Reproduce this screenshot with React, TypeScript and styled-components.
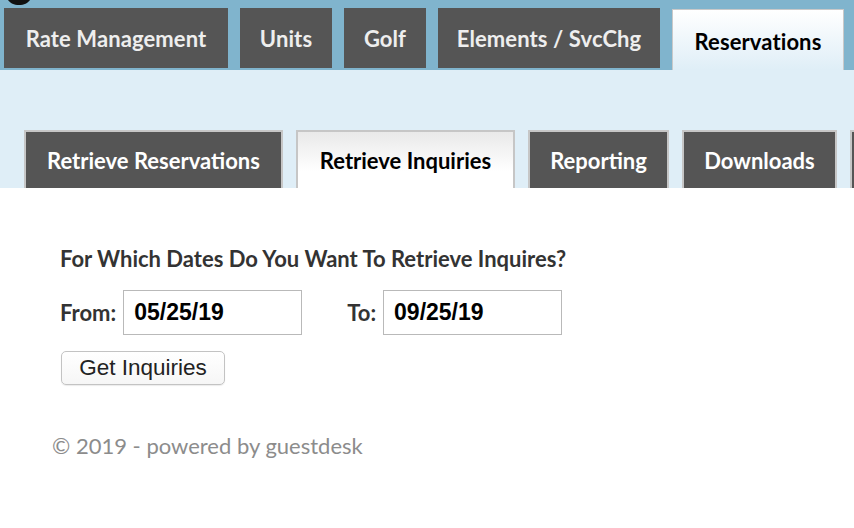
import React from "react";
import styled, { createGlobalStyle } from "styled-components";

const Global = createGlobalStyle`
  html, body { margin: 0; padding: 0; background: #ffffff; }
  body { font-family: Lato, "Open Sans", sans-serif; }
`;

const Page = styled.div`
  position: relative;
  width: 854px;
  min-height: 528px;
  background: #ffffff;
`;

const LogoBit = styled.svg`
  position: absolute;
  left: 0;
  top: 0;
`;

const TopBar = styled.div`
  display: flex;
  align-items: flex-end;
  gap: 12px;
  height: 70px;
  box-sizing: border-box;
  padding: 8px 0 0 4px;
  background: #80b4cd;
`;

const TopTab = styled.div<{ $active?: boolean; $w: number }>`
  flex: none;
  display: flex;
  align-items: center;
  justify-content: center;
  box-sizing: border-box;
  width: ${(p) => p.$w}px;
  height: ${(p) => (p.$active ? 61 : 60)}px;
  margin-bottom: ${(p) => (p.$active ? 0 : 2)}px;
  padding-top: ${(p) => (p.$active ? 2 : 0)}px;
  font-family: Lato, sans-serif;
  font-weight: 700;
  font-size: 22px;
  letter-spacing: 0.1px;
  color: ${(p) => (p.$active ? "#000000" : "#eeeeee")};
  background: ${(p) =>
    p.$active ? "linear-gradient(#ffffff, #dfeef7)" : "#555555"};
  border: ${(p) => (p.$active ? "1px solid #c9c9c9" : "none")};
  border-bottom: none;
`;

const SubBar = styled.div`
  display: flex;
  align-items: flex-end;
  gap: 13px;
  height: 118px;
  box-sizing: border-box;
  padding-left: 24px;
  background: #dfeef7;
  overflow: hidden;
`;

const SubTab = styled.div<{ $active?: boolean; $w: number }>`
  flex: none;
  display: flex;
  align-items: center;
  justify-content: center;
  box-sizing: border-box;
  width: ${(p) => p.$w}px;
  height: 58px;
  font-family: Lato, sans-serif;
  font-weight: 700;
  font-size: 22px;
  color: ${(p) => (p.$active ? "#000000" : "#ffffff")};
  background: ${(p) =>
    p.$active ? "linear-gradient(#e9e9e9, #ffffff 70%)" : "#555555"};
  border: 2px solid #c6c6c6;
  border-bottom: none;
`;

const Content = styled.div`
  padding: 58px 0 0 60px;
`;

const Heading = styled.div`
  font-family: Lato, sans-serif;
  font-weight: 700;
  font-size: 22px;
  color: #333333;
  height: 26px;
  line-height: 26px;
`;

const DateRow = styled.div`
  display: flex;
  align-items: center;
  margin-top: 18px;
`;

const Label = styled.label<{ $ml?: number }>`
  font-family: Lato, sans-serif;
  font-weight: 700;
  font-size: 22px;
  color: #333333;
  margin-left: ${(p) => p.$ml ?? 0}px;
  margin-right: 7px;
`;

const DateInput = styled.input`
  box-sizing: border-box;
  width: 179px;
  height: 45px;
  padding: 0 10px;
  border: 1px solid #b9b9b9;
  border-radius: 0;
  font-family: "Liberation Sans", Arial, sans-serif;
  font-weight: 700;
  font-size: 23px;
  color: #000000;
  outline: none;
`;

const Button = styled.button`
  display: block;
  box-sizing: border-box;
  margin-top: 16px;
  margin-left: 1px;
  width: 164px;
  height: 34px;
  padding: 0;
  background: linear-gradient(#ffffff, #f6f6f6);
  border: 1px solid #c3c3c3;
  border-radius: 5px;
  box-shadow: 0 1px 1px rgba(0, 0, 0, 0.08);
  font-family: "Liberation Sans", Arial, sans-serif;
  font-size: 22.5px;
  color: #222222;
`;

const Footer = styled.div`
  margin: 48px 0 0 -8px;
  height: 26px;
  line-height: 26px;
  font-family: Lato, sans-serif;
  font-size: 22px;
  color: #8c8c8c;
`;

const topTabs = [
  { label: "Rate Management", w: 224 },
  { label: "Units", w: 92 },
  { label: "Golf", w: 82 },
  { label: "Elements / SvcChg", w: 222 },
  { label: "Reservations", w: 172, active: true },
];

const subTabs = [
  { label: "Retrieve Reservations", w: 259 },
  { label: "Retrieve Inquiries", w: 219, active: true },
  { label: "Reporting", w: 141 },
  { label: "Downloads", w: 155 },
  { label: "", w: 100 },
];

export default function App() {
  return (
    <Page>
      <Global />
      <TopBar>
        {topTabs.map((t) => (
          <TopTab key={t.label} $w={t.w} $active={t.active}>
            {t.label}
          </TopTab>
        ))}
      </TopBar>
      <LogoBit width="34" height="6" viewBox="0 0 34 6">
        <path d="M8 0 H30 C28 3 24 5 19 5 C14 5 10 3 8 0 Z" fill="#111111" />
      </LogoBit>
      <SubBar>
        {subTabs.map((t, i) => (
          <SubTab key={i} $w={t.w} $active={t.active}>
            {t.label}
          </SubTab>
        ))}
      </SubBar>
      <Content>
        <Heading>For Which Dates Do You Want To Retrieve Inquires?</Heading>
        <DateRow>
          <Label>From:</Label>
          <DateInput defaultValue="05/25/19" />
          <Label $ml={45}>To:</Label>
          <DateInput defaultValue="09/25/19" />
        </DateRow>
        <Button>Get Inquiries</Button>
        <Footer>© 2019 - powered by guestdesk</Footer>
      </Content>
    </Page>
  );
}
